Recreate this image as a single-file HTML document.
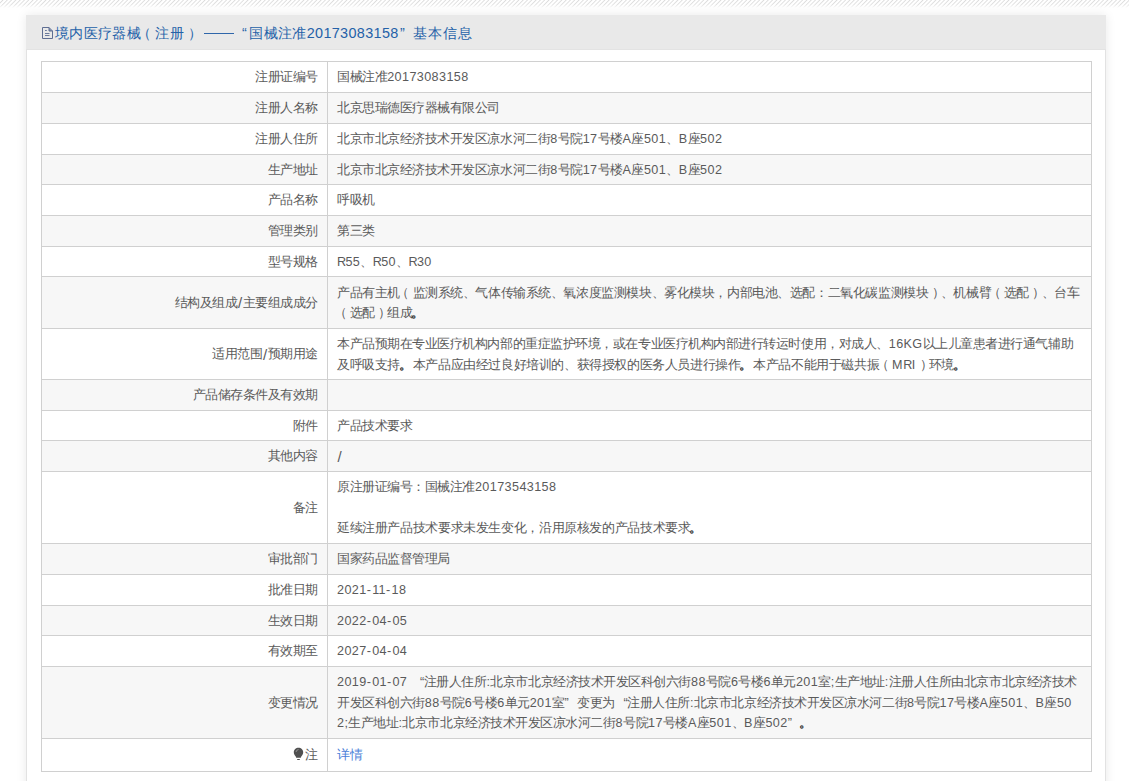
<!DOCTYPE html>
<html><head><meta charset="utf-8">
<style>
*{box-sizing:border-box;margin:0;padding:0}
html,body{width:1129px;height:781px;overflow:hidden;background:#fff;font-family:"Liberation Sans",sans-serif;}
.stripes{position:absolute;left:0;top:0;width:1129px;height:8px;background:linear-gradient(to bottom,rgba(255,255,255,0) 0,rgba(255,255,255,0.1) 55%,#fff 100%),repeating-linear-gradient(135deg,#fff 0,#fff 1.2px,#dcdcdc 2.1px,#fff 3.04px);}
.panel{position:absolute;left:26px;top:15px;width:1080px;height:800px;background:#fff;border-left:1px solid #e2e2e2;border-right:1px solid #e2e2e2;
 box-shadow:0 0 10px rgba(0,0,0,0.09);}
.hd{position:absolute;left:26px;top:15px;width:1080px;height:35px;background:#e9e9e9;border-bottom:1px solid #e3e3e3}
.icon{position:absolute;left:41px;top:26px;width:14px;height:14px}
.t{position:absolute;top:16px;height:35px;line-height:35px;font-size:14.4px;color:#2461a8;white-space:nowrap}
.t1{left:55px;letter-spacing:0.35px}
.dash{position:absolute;left:203.5px;top:33px;width:30.5px;height:1px;background:#2f66aa}
.t2{left:235px;letter-spacing:0.35px}
.t2 .zh2{letter-spacing:1px}
.t2 .dg{letter-spacing:0.35px}
.t .ql,.t .qr{display:inline-block;width:14.3px;letter-spacing:0}
.t .ql{padding-right:2.5px}.t .qr{padding-left:1.5px}
.pl{position:relative;left:-3.5px}.pr{position:relative;left:3.5px}
.t .pl{left:-4px}.t .pr{left:3.5px}
.ql{display:inline-block;width:12.6px;text-align:right}
.qr{display:inline-block;width:12.6px;text-align:left}
.tbl{position:absolute;left:41px;top:61px;width:1051px;height:711px;border-left:1px solid #d0d0d0;border-right:1px solid #d0d0d0;border-bottom:1px solid #d0d0d0;}
.r{position:absolute;left:0;width:1049px;border-top:1px solid #d0d0d0;display:flex;}
.r.g{background:#f7f7f7}
.k{width:285px;flex:none;padding:1px 9px 0 0;font-size:12.6px;letter-spacing:-0.46px;color:#5a5a5a;display:flex;align-items:center;justify-content:flex-end;white-space:nowrap}
.v{flex:1;border-left:1px solid #d0d0d0;padding:1px 0 0 9px;font-size:12.6px;letter-spacing:-0.46px;color:#5a5a5a;display:flex;align-items:center;line-height:20.5px;white-space:nowrap}
.l{letter-spacing:0.4px}
.ls1{letter-spacing:-0.39px}.ls1 .l{letter-spacing:0.9px}
.ls2{letter-spacing:-0.42px}.ls3{letter-spacing:-0.38px}
.pe{font-weight:bold;color:#333;position:relative;left:-1.5px}
.hy{letter-spacing:1.3px}
.rr{letter-spacing:-0.7px}
.sl{font-size:15px;line-height:0;letter-spacing:1.2px;position:relative;left:0.5px;top:1.5px}
.bulb{display:inline-block;width:11px;height:13px;vertical-align:-1px;margin-right:1px}
a{color:#4a80d8;text-decoration:none}
</style></head>
<body>
<div class="stripes"></div>
<div class="panel"></div>
<div class="hd"></div>
<svg class="icon" viewBox="0 0 14 14"><path d="M1.5 1.5H8L11.5 5V12.5H1.5Z" fill="none" stroke="#5f6e92" stroke-width="1"/><path d="M8 1.5V5H11.5" fill="#8090b0" stroke="#5f6e92" stroke-width="1"/><path d="M4 4.5H5.8M4 7.5H8.5M4 9.5H8.5" stroke="#6b7a9c" stroke-width="1"/></svg>
<div class="t t1">境内医疗器械<span class="pl">（</span>注册<span class="pr">）</span></div>
<div class="dash"></div>
<div class="t t2"><span class="ql">“</span>国械注准<span class="dg">20173083158</span><span class="qr">”</span><span class="zh2">基本信息</span></div>

<div class="tbl">
<div class="r" style="top:0px;height:31px"><div class="k"><div>注册证编号</div></div><div class="v"><div>国械注准<span class="l">20173083158</span></div></div></div>
<div class="r g" style="top:31px;height:31px"><div class="k"><div>注册人名称</div></div><div class="v"><div>北京思瑞德医疗器械有限公司</div></div></div>
<div class="r" style="top:62px;height:31px"><div class="k"><div>注册人住所</div></div><div class="v"><div>北京市北京经济技术开发区凉水河二街<span class="l">8</span>号院<span class="l">17</span>号楼<span class="l">A</span>座<span class="l">501</span>、<span class="l">B</span>座<span class="l">502</span></div></div></div>
<div class="r g" style="top:93px;height:30px"><div class="k"><div>生产地址</div></div><div class="v"><div>北京市北京经济技术开发区凉水河二街<span class="l">8</span>号院<span class="l">17</span>号楼<span class="l">A</span>座<span class="l">501</span>、<span class="l">B</span>座<span class="l">502</span></div></div></div>
<div class="r" style="top:123px;height:31px"><div class="k"><div>产品名称</div></div><div class="v"><div>呼吸机</div></div></div>
<div class="r g" style="top:154px;height:31px"><div class="k"><div>管理类别</div></div><div class="v"><div>第三类</div></div></div>
<div class="r" style="top:185px;height:30px"><div class="k"><div>型号规格</div></div><div class="v"><div><span class="l"><span class="rr">R</span>55</span>、<span class="l"><span class="rr">R</span>50</span>、<span class="l"><span class="rr">R</span>30</span></div></div></div>
<div class="r g" style="top:215px;height:52px"><div class="k"><div>结构及组成<span class="l"><span class="sl">/</span></span>主要组成成分</div></div><div class="v"><div><span class="ls2">产品有主机<span class="pl">（</span>监测系统、气体传输系统、氧浓度监测模块、雾化模块，内部电池、选配：二氧化碳监测模块<span class="pr">）</span>、机械臂<span class="pl">（</span>选配<span class="pr">）</span>、台车</span><br><span class="pl">（</span>选配<span class="pr">）</span>组成<span class="pe">。</span></div></div></div>
<div class="r" style="top:267px;height:51px"><div class="k"><div>适用范围<span class="l"><span class="sl">/</span></span>预期用途</div></div><div class="v"><div>本产品预期在专业医疗机构内部的重症监护环境，或在专业医疗机构内部进行转运时使用，对成人、<span class="l">16KG</span>以上儿童患者进行通气辅助<br><span class="ls1">及呼吸支持<span class="pe">。</span>本产品应由经过良好培训的、获得授权的医务人员进行操作<span class="pe">。</span>本产品不能用于磁共振<span class="pl">（</span><span class="l">M<span class="rr">R</span>I</span><span class="pr">）</span>环境<span class="pe">。</span></span></div></div></div>
<div class="r g" style="top:318px;height:31px"><div class="k"><div>产品储存条件及有效期</div></div><div class="v"><div></div></div></div>
<div class="r" style="top:349px;height:30px"><div class="k"><div>附件</div></div><div class="v"><div>产品技术要求</div></div></div>
<div class="r g" style="top:379px;height:31px"><div class="k"><div>其他内容</div></div><div class="v"><div><span class="l"><span class="sl">/</span></span></div></div></div>
<div class="r" style="top:410px;height:72px"><div class="k"><div>备注</div></div><div class="v"><div>原注册证编号：国械注准<span class="l">20173543158</span><br><br><span class="ls3">延续注册产品技术要求未发生变化，沿用原核发的产品技术要求<span class="pe">。</span></span></div></div></div>
<div class="r g" style="top:482px;height:31px"><div class="k"><div>审批部门</div></div><div class="v"><div>国家药品监督管理局</div></div></div>
<div class="r" style="top:513px;height:31px"><div class="k"><div>批准日期</div></div><div class="v"><div><span class="l">2021<span class="hy">-</span>11<span class="hy">-</span>18</span></div></div></div>
<div class="r g" style="top:544px;height:30px"><div class="k"><div>生效日期</div></div><div class="v"><div><span class="l">2022<span class="hy">-</span>04<span class="hy">-</span>05</span></div></div></div>
<div class="r" style="top:574px;height:31px"><div class="k"><div>有效期至</div></div><div class="v"><div><span class="l">2027<span class="hy">-</span>04<span class="hy">-</span>04</span></div></div></div>
<div class="r g" style="top:605px;height:72px"><div class="k"><div>变更情况</div></div><div class="v"><div><span class="l">2019<span class="hy">-</span>01<span class="hy">-</span>07 </span><span class="ql">“</span>注册人住所<span class="l">:</span>北京市北京经济技术开发区科创六街<span class="l">88</span>号院<span class="l">6</span>号楼<span class="l">6</span>单元<span class="l">201</span>室<span class="l">;</span>生产地址<span class="l">:</span>注册人住所由北京市北京经济技术<br>开发区科创六街<span class="l">88</span>号院<span class="l">6</span>号楼<span class="l">6</span>单元<span class="l">201</span>室<span class="qr">”</span>变更为<span class="ql">“</span>注册人住所<span class="l">:</span>北京市北京经济技术开发区凉水河二街<span class="l">8</span>号院<span class="l">17</span>号楼<span class="l">A</span>座<span class="l">501</span>、<span class="l">B</span>座<span class="l">50</span><br><span class="l">2;</span>生产地址<span class="l">:</span>北京市北京经济技术开发区凉水河二街<span class="l">8</span>号院<span class="l">17</span>号楼<span class="l">A</span>座<span class="l">501</span>、<span class="l">B</span>座<span class="l">502</span><span class="qr">”</span><span class="pe">。</span></div></div></div>
<div class="r" style="top:677px;height:33px"><div class="k"><div><svg class="bulb" viewBox="0 0 11 13"><path d="M5.5 0.8C8.1 0.8 10.2 2.8 10.2 5.2C10.2 7 9.3 8 8.4 9.3L7.8 10.8H3.2L2.6 9.3C1.7 8 0.8 7 0.8 5.2C0.8 2.8 2.9 0.8 5.5 0.8Z" fill="#505050"/><path d="M4.2 12.5H6.8" stroke="#505050" stroke-width="1"/><path d="M3 5Q3.3 2.9 5.5 2.5" stroke="#9a9a9a" stroke-width="0.9" fill="none"/></svg>注</div></div><div class="v"><div><a>详情</a></div></div></div>
</div>
</body></html>
